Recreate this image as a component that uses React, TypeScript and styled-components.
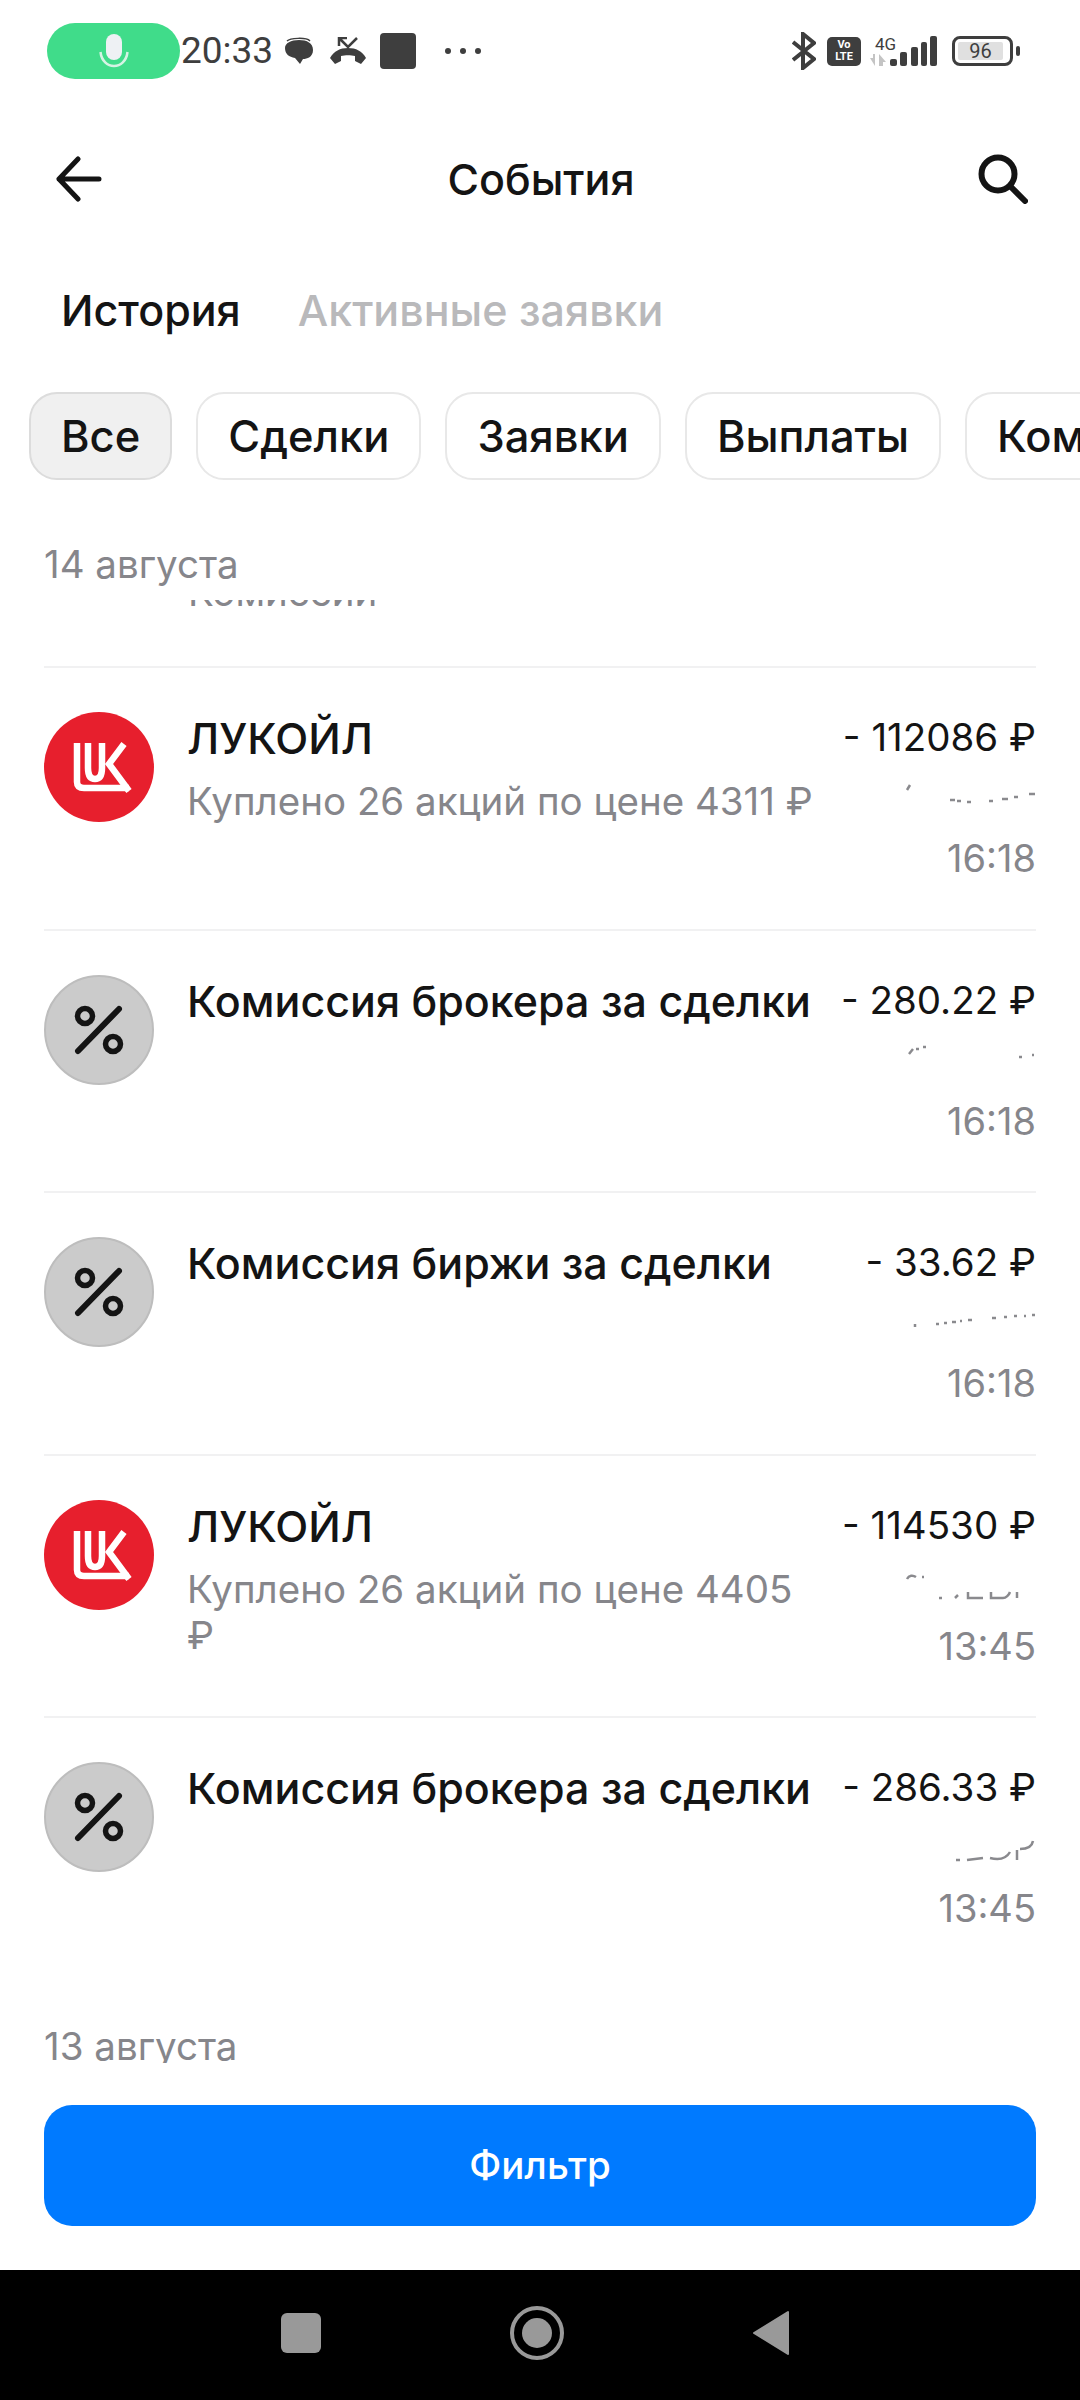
import { FC } from "react";
import styled, { createGlobalStyle } from "styled-components";

interface EventRow {
  logo: "luk" | "percent";
  title: string;
  subtitle?: string;
  amount: string;
  time: string;
  // what is left of the masked out line under the amount
  remnant: string;
}

const EVENTS: EventRow[] = [
  {
    logo: "luk",
    title: "ЛУКОЙЛ",
    subtitle: "Куплено 26 акций по цене 4311 ₽",
    amount: "- 112086 ₽",
    time: "16:18",
    remnant: "M30 19l-3 5 M70 34h5 M77 35h4 M87 36h4 M109 35h4 M122 33h6 M134 31h4 M149 28h6",
  },
  {
    logo: "percent",
    title: "Комиссия брокера за сделки",
    amount: "- 280.22 ₽",
    time: "16:18",
    remnant: "M29 25l4-5 M36 20h3 M43 18h3 M139 28h3 M152 26h2",
  },
  {
    logo: "percent",
    title: "Комиссия биржи за сделки",
    amount: "- 33.62 ₽",
    time: "16:18",
    remnant: "M35 33v3 M56 33h3 M64 32h3 M72 31h4 M80 30h2 M88 29h4 M112 27h4 M124 26h3 M134 25h3 M144 25h2 M152 24h3",
  },
  {
    logo: "luk",
    title: "ЛУКОЙЛ",
    subtitle: "Куплено 26 акций по цене 4405 ₽",
    amount: "- 114530 ₽",
    time: "13:45",
    remnant: "M27 25c2-4 6-4 9-2 M42 23h2 M59 44h3 M75 44l3-3 M88 38v6h15 M111 38v6h12c3 0 6-3 7-6 M137 38v6",
  },
  {
    logo: "percent",
    title: "Комиссия брокера за сделки",
    amount: "- 286.33 ₽",
    time: "13:45",
    remnant: "M76 44h4 M87 44l16-2 M110 42c8 2 16 1 20-6 M137 44v-10 M140 33c6 0 12-2 13-8",
  },
];

const CHIPS = ["Все", "Сделки", "Заявки", "Выплаты", "Комиссии"];

const LukLogo: FC = () => (
  <svg width="110" height="110" viewBox="0 0 110 110" fill="none">
    <circle cx="55" cy="55" r="55" fill="#e71f2d" />
    <g stroke="#fff" strokeWidth="6.500">
      <path d="M33 31V70Q33 76 40 76H85" />
      <path d="M44 31V56Q44 67 51 67Q58 67 58 56V31" />
      <path d="M80 32L65 52L85 79" />
    </g>
  </svg>
);

const PercentIcon: FC = () => (
  <svg width="110" height="110" viewBox="0 0 110 110">
    <circle cx="55" cy="55" r="54" fill="#cbcbcb" stroke="#bdbdbd" strokeWidth="2" />
    <circle cx="41" cy="41" r="7.5" fill="none" stroke="#141414" strokeWidth="5.5" />
    <circle cx="69" cy="69" r="7.5" fill="none" stroke="#141414" strokeWidth="5.5" />
    <path d="M34 76 L75 34" stroke="#141414" strokeWidth="6" strokeLinecap="round" />
  </svg>
);

const BackIcon: FC = () => (
  <svg width="46" height="46" viewBox="0 0 46 46" fill="none" stroke="#141414" strokeWidth="5" strokeLinecap="round" strokeLinejoin="round">
    <path d="M43 23H3M22 3 3 23l19 20" />
  </svg>
);

const SearchIcon: FC = () => (
  <svg width="50" height="50" viewBox="0 0 50 50" fill="none" stroke="#141414" strokeWidth="6" strokeLinecap="round">
    <circle cx="20" cy="20" r="16.5" />
    <path d="M32 32 47 47" />
  </svg>
);

const MicIcon: FC = () => (
  <svg width="30" height="34" viewBox="0 0 30 34">
    <rect x="7" y="0" width="16" height="26" rx="8" fill="#eef1f4" />
    <path d="M1.5 18c1 9 7 14 13.500 14s12.500-5 13.500-14" fill="none" stroke="#d6f3e4" strokeWidth="2.5" />
  </svg>
);

const ChatIcon: FC = () => (
  <svg width="28" height="28" viewBox="0 0 28 28">
    <path d="M14 3c8 0 14 3 14 10s-6 9-10 9l-3 5-5-6C4 20 0 17 0 11 0 6 6 3 14 3z" fill="#3e3e3e" />
    <path d="M2 4c3-3 19-4 23 0" stroke="#3e3e3e" strokeWidth="1.500" fill="none" />
  </svg>
);

const MissedCallIcon: FC = () => (
  <svg width="36" height="28" viewBox="0 0 36 28" fill="#3e3e3e">
    <path d="M0 21c4-7 10-10 18-10s14 3 18 10l-5 6-6-3v-5c-4-1-10-1-14 0v5l-6 3z" />
    <path d="M9 9V1h8M10 2l8 8 9-9" fill="none" stroke="#3e3e3e" strokeWidth="2.500" />
  </svg>
);

const BluetoothIcon: FC = () => (
  <svg width="24" height="38" viewBox="0 0 24 38" fill="none" stroke="#3e3e3e" strokeWidth="4">
    <path d="M1 10 22 27 11 36V2l11 9L1 28" />
  </svg>
);

const TrafficArrows: FC = () => (
  <svg width="16" height="12" viewBox="0 0 16 12" fill="#c4c4c4">
    <path d="M0 4h3V0h2v12zM9 12V0l7 8h-3v4z" />
  </svg>
);

const SignalIcon: FC = () => (
  <svg width="48" height="30" viewBox="0 0 48 30" fill="#3e3e3e">
    <rect x="1" y="23" width="7" height="7" rx="2" />
    <rect x="11" y="16" width="7" height="14" rx="2" />
    <rect x="22" y="11" width="7" height="19" rx="2" />
    <rect x="32" y="6" width="6" height="24" rx="2" />
    <rect x="41" y="0" width="7" height="30" rx="2" />
  </svg>
);

const NavBack: FC = () => (
  <svg width="38" height="46" viewBox="0 0 38 46">
    <path d="M36 2v42L2 23z" fill="#999" stroke="#999" strokeWidth="2" strokeLinejoin="round" />
  </svg>
);

const NavHome: FC = () => (
  <svg width="54" height="54" viewBox="0 0 54 54">
    <circle cx="27" cy="27" r="25" fill="none" stroke="#999" strokeWidth="4" />
    <circle cx="27" cy="27" r="15" fill="#999" />
  </svg>
);

const Remnant: FC<{ d: string }> = ({ d }) => (
  <svg width="156" height="60" viewBox="0 0 156 60" fill="none" stroke="#8a8a8e" strokeWidth="2.500">
    <path d={d} />
  </svg>
);

const App: FC = () => {
  return (
    <Page>
      <GlobalStyle />
      <StatusBar>
        <StatusLeft>
          <MicPill>
            <MicIcon />
          </MicPill>
          <StatusTime>20:33</StatusTime>
          <StatusSlot gap={12}>
            <ChatIcon />
          </StatusSlot>
          <StatusSlot gap={17}>
            <MissedCallIcon />
          </StatusSlot>
          <AppSquare />
          <StatusDots>
            <Dot />
            <Dot />
            <Dot />
          </StatusDots>
        </StatusLeft>
        <StatusRight>
          <BluetoothIcon />
          <VolteBadge>
            <span>Vo</span>
            <span>LTE</span>
          </VolteBadge>
          <NetworkColumn>
            <NetworkLabel>4G</NetworkLabel>
            <TrafficArrows />
          </NetworkColumn>
          <SignalIcon />
          <Battery>
            <BatteryFill>96</BatteryFill>
          </Battery>
          <BatteryCap />
        </StatusRight>
      </StatusBar>

      <Header>
        <HeaderButton>
          <BackIcon />
        </HeaderButton>
        <HeaderTitle>События</HeaderTitle>
        <HeaderButton>
          <SearchIcon />
        </HeaderButton>
      </Header>

      <Tabs>
        <Tab active>История</Tab>
        <Tab>Активные заявки</Tab>
      </Tabs>

      <ChipRow>
        {CHIPS.map((chip, index) => (
          <Chip key={chip} active={index === 0}>
            {chip}
          </Chip>
        ))}
      </ChipRow>

      <DateLabel>14 августа</DateLabel>

      <Feed>
        <ClippedRow>
          <ClippedText>Комиссии</ClippedText>
        </ClippedRow>
        {EVENTS.map((event, index) => (
          <Row key={index}>
            <RowIcon>{event.logo === "luk" ? <LukLogo /> : <PercentIcon />}</RowIcon>
            <RowBody>
              <RowTitle>{event.title}</RowTitle>
              {event.subtitle && <RowSubtitle>{event.subtitle}</RowSubtitle>}
            </RowBody>
            <RowMeta>
              <RowAmount>{event.amount}</RowAmount>
              <RemnantSlot>
                <Remnant d={event.remnant} />
              </RemnantSlot>
              <RowTime>{event.time}</RowTime>
            </RowMeta>
          </Row>
        ))}
        <NextDate>13 августа</NextDate>
      </Feed>

      <FilterBar>
        <FilterButton>Фильтр</FilterButton>
      </FilterBar>

      <NavBar>
        <NavSquare />
        <NavHome />
        <NavBack />
      </NavBar>
    </Page>
  );
};

export default App;

const GlobalStyle = createGlobalStyle`
  html, body {
    margin: 0;
    padding: 0;
    background: #fff;
  }
  * {
    box-sizing: border-box;
  }
`;

const Page = styled.div`
  display: flex;
  flex-direction: column;
  width: 1080px;
  height: 2400px;
  overflow: hidden;
  background: #fff;
  color: #141414;
  font-family: Inter, "Liberation Sans", sans-serif;
`;

const StatusBar = styled.div`
  display: flex;
  flex-shrink: 0;
  align-items: center;
  justify-content: space-between;
  height: 102px;
  padding: 0 60px 0 47px;
  color: #3e3e3e;
  font-family: Roboto, "Liberation Sans", sans-serif;
`;

const StatusLeft = styled.div`
  display: flex;
  align-items: center;
`;

const MicPill = styled.div`
  display: flex;
  align-items: center;
  justify-content: center;
  width: 133px;
  height: 56px;
  border-radius: 28px;
  background: #40dc8a;
`;

const StatusTime = styled.span`
  margin-left: 1px;
  font-size: 37px;
  line-height: 40px;
`;

const StatusSlot = styled.span<{ gap: number }>`
  display: flex;
  margin-left: ${({ gap }) => gap}px;
`;

const AppSquare = styled.div`
  width: 36px;
  height: 36px;
  margin-left: 14px;
  border-radius: 4px;
  background: #3e3e3e;
`;

const StatusDots = styled.div`
  display: flex;
  gap: 9px;
  margin-left: 29px;
`;

const Dot = styled.i`
  width: 6px;
  height: 6px;
  border-radius: 50%;
  background: #3e3e3e;
`;

const StatusRight = styled.div`
  display: flex;
  align-items: center;
`;

const VolteBadge = styled.div`
  display: flex;
  flex-direction: column;
  align-items: center;
  justify-content: center;
  width: 34px;
  height: 29px;
  margin-left: 11px;
  border-radius: 5px;
  background: #3e3e3e;
  color: #fff;
  font-size: 11px;
  line-height: 12px;
  font-weight: 700;
`;

const NetworkColumn = styled.div`
  display: flex;
  flex-direction: column;
  width: 19px;
  height: 30px;
  margin-left: 9px;
  white-space: nowrap;
`;

const NetworkLabel = styled.span`
  height: 18px;
  padding-left: 5px;
  font-size: 17px;
  line-height: 16px;
`;

const Battery = styled.div`
  display: flex;
  align-items: center;
  width: 61px;
  height: 30px;
  margin-left: 15px;
  padding: 3px;
  border: 3px solid #3e3e3e;
  border-radius: 8px;
`;

const BatteryFill = styled.div`
  width: 92%;
  height: 100%;
  border-radius: 2px;
  background: #e0e0e0;
  color: #3e3e3e;
  font-size: 20px;
  line-height: 18px;
  text-align: center;
`;

const BatteryCap = styled.div`
  width: 4px;
  height: 10px;
  margin-left: 3px;
  border-radius: 2px;
  background: #3e3e3e;
`;

const Header = styled.div`
  display: flex;
  flex-shrink: 0;
  align-items: center;
  justify-content: space-between;
  height: 156px;
  padding: 0 52px 2px 54px;
`;

const HeaderButton = styled.div`
  display: flex;
  width: 50px;
  height: 50px;
  align-items: center;
  justify-content: center;
`;

const HeaderTitle = styled.h1`
  margin: 0;
  font-size: 43px;
  font-weight: 500;
`;

const Tabs = styled.div`
  display: flex;
  flex-shrink: 0;
  align-items: center;
  gap: 57px;
  height: 104px;
  padding: 0 61px;
`;

const Tab = styled.span<{ active?: boolean }>`
  font-size: 43px;
  font-weight: 500;
  color: ${({ active }) => (active ? "#141414" : "#b9b9bb")};
`;

const ChipRow = styled.div`
  display: flex;
  flex-shrink: 0;
  gap: 24px;
  height: 88px;
  margin-top: 30px;
  padding-left: 29px;
  white-space: nowrap;
`;

const Chip = styled.div<{ active?: boolean }>`
  display: flex;
  align-items: center;
  flex-shrink: 0;
  padding: 0 30px;
  border: 2px solid ${({ active }) => (active ? "#dcdcdc" : "#e8e8e8")};
  border-radius: 28px;
  background: ${({ active }) => (active ? "#f0f0f0" : "#fff")};
  font-size: 43.5px;
  font-weight: 500;
`;

const DateLabel = styled.div`
  flex-shrink: 0;
  margin-top: 61px;
  padding: 0 44px;
  font-size: 38.5px;
  line-height: 46px;
  color: #86868b;
`;

const Feed = styled.div`
  display: flex;
  flex: 1;
  flex-direction: column;
  min-height: 0;
  margin-top: 13px;
  padding: 0 44px;
  overflow: hidden;
`;

const ClippedRow = styled.div`
  flex-shrink: 0;
  height: 66px;
  padding-left: 144px;
  overflow: hidden;
`;

const ClippedText = styled.div`
  margin-top: -29px;
  font-size: 38.5px;
  line-height: 42px;
  color: #86868b;
`;

const Row = styled.div`
  display: flex;
  flex-shrink: 0;
  height: 262.6px;
  padding-top: 44px;
  border-top: 2px solid #f1f1f2;
`;

const RowIcon = styled.div`
  flex-shrink: 0;
  width: 110px;
  height: 110px;
`;

const RowBody = styled.div`
  flex-shrink: 0;
  width: 666px;
  padding: 2px 0 0 33px;
`;

const RowTitle = styled.div`
  font-size: 43px;
  line-height: 48px;
  font-weight: 500;
`;

const RowSubtitle = styled.div`
  margin-top: 16px;
  font-size: 38.5px;
  line-height: 46px;
  color: #86868b;
`;

const RowMeta = styled.div`
  display: flex;
  flex: 1;
  flex-direction: column;
  align-items: flex-end;
`;

const RowAmount = styled.div`
  margin-top: 2px;
  font-size: 38.5px;
  line-height: 46px;
  white-space: nowrap;
`;

const RemnantSlot = styled.div`
  height: 60px;
  margin-top: 6px;
`;

const RowTime = styled.div`
  margin-top: 9px;
  font-size: 38px;
  line-height: 46px;
  color: #86868b;
`;

const NextDate = styled.div`
  flex-shrink: 0;
  margin-top: 44px;
  font-size: 38.5px;
  line-height: 46px;
  color: #86868b;
`;

const FilterBar = styled.div`
  flex-shrink: 0;
  padding: 42px 44px 44px;
`;

const FilterButton = styled.div`
  display: flex;
  align-items: center;
  justify-content: center;
  height: 121px;
  padding-bottom: 2px;
  border-radius: 28px;
  background: #007aff;
  color: #fff;
  font-size: 38.5px;
  font-weight: 500;
`;

const NavBar = styled.div`
  display: flex;
  flex-shrink: 0;
  align-items: center;
  justify-content: space-between;
  height: 130px;
  padding: 0 290px 4px 281px;
  background: #000;
`;

const NavSquare = styled.div`
  width: 40px;
  height: 40px;
  border-radius: 6px;
  background: #999;
`;
